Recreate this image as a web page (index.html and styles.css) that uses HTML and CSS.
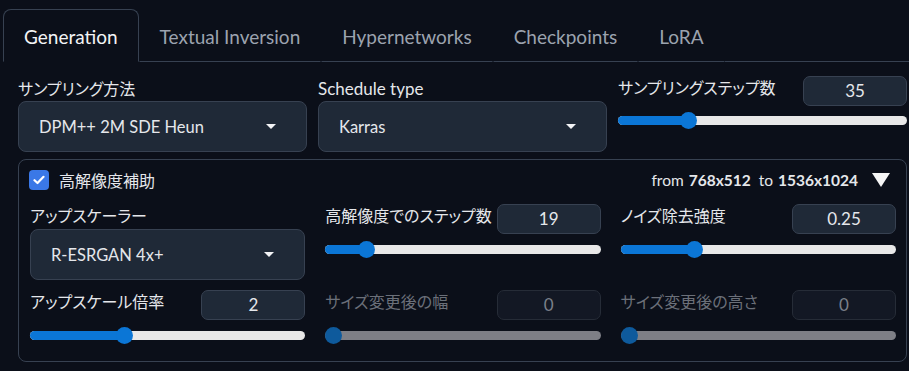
FILE: index.html
```html
<!DOCTYPE html>
<html lang="ja">
<head>
    <meta charset="UTF-8">
    <title>Generation</title>
    <link rel="stylesheet" href="styles.css">
</head>
<body>

    <!-- Tab bar -->
    <div class="tabs">
        <button class="tab active">Generation</button>
        <button class="tab">Textual Inversion</button>
        <button class="tab">Hypernetworks</button>
        <button class="tab">Checkpoints</button>
        <button class="tab">LoRA</button>
        <div class="tab-fill"></div>
    </div>

    <div class="panel">
        <!-- Sampler row -->
        <div class="row">
            <div class="col">
                <div class="field-label">サンプリング方法</div>
                <div class="dropdown">
                    <span>DPM++ 2M SDE Heun</span>
                    <span class="caret"></span>
                </div>
            </div>
            <div class="col">
                <div class="field-label latin">Schedule type</div>
                <div class="dropdown">
                    <span>Karras</span>
                    <span class="caret"></span>
                </div>
            </div>
            <div class="col">
                <div class="slider-head">
                    <div class="field-label">サンプリングステップ数</div>
                    <div class="number">35</div>
                </div>
                <div class="slider">
                    <div class="track"></div>
                    <div class="fill" style="width: 71px"></div>
                    <div class="thumb" style="left: 62px"></div>
                </div>
            </div>
        </div>

        <!-- Hires fix -->
        <div class="accordion">
            <div class="acc-head">
                <label class="check">
                    <span class="box">
                        <svg width="12" height="10" viewBox="0 0 12 10"><path d="M1.5 5.2 L4.5 8 L10.5 1.8" fill="none" stroke="#fff" stroke-width="2.2" stroke-linecap="round" stroke-linejoin="round"/></svg>
                    </span>
                    高解像度補助
                </label>
                <div class="acc-info">
                    from <b>768x512</b>&nbsp; to <b>1536x1024</b>
                    <svg class="acc-toggle" width="18" height="14" viewBox="0 0 18 14"><polygon points="0,0 18,0 9,14" fill="#f5f5f5"/></svg>
                </div>
            </div>

            <div class="row inner">
                <div class="col">
                    <div class="field-label">アップスケーラー</div>
                    <div class="dropdown">
                        <span>R-ESRGAN 4x+</span>
                        <span class="caret"></span>
                    </div>
                </div>
                <div class="col">
                    <div class="slider-head">
                        <div class="field-label">高解像度でのステップ数</div>
                        <div class="number">19</div>
                    </div>
                    <div class="slider">
                        <div class="track"></div>
                        <div class="fill" style="width: 41px"></div>
                        <div class="thumb" style="left: 33px"></div>
                    </div>
                </div>
                <div class="col">
                    <div class="slider-head">
                        <div class="field-label">ノイズ除去強度</div>
                        <div class="number">0.25</div>
                    </div>
                    <div class="slider">
                        <div class="track"></div>
                        <div class="fill" style="width: 73px"></div>
                        <div class="thumb" style="left: 65px"></div>
                    </div>
                </div>
            </div>

            <div class="row inner second">
                <div class="col">
                    <div class="slider-head">
                        <div class="field-label">アップスケール倍率</div>
                        <div class="number">2</div>
                    </div>
                    <div class="slider">
                        <div class="track"></div>
                        <div class="fill" style="width: 94px"></div>
                        <div class="thumb" style="left: 86px"></div>
                    </div>
                </div>
                <div class="col disabled">
                    <div class="slider-head">
                        <div class="field-label">サイズ変更後の幅</div>
                        <div class="number">0</div>
                    </div>
                    <div class="slider">
                        <div class="track"></div>
                        <div class="thumb" style="left: 0px"></div>
                    </div>
                </div>
                <div class="col disabled">
                    <div class="slider-head">
                        <div class="field-label">サイズ変更後の高さ</div>
                        <div class="number">0</div>
                    </div>
                    <div class="slider">
                        <div class="track"></div>
                        <div class="thumb" style="left: 0px"></div>
                    </div>
                </div>
            </div>
        </div>
    </div>

</body>
</html>
```
FILE: styles.css
```css
body {
    margin: 0;
    background-color: #0b0f19;
    color: #e5e7eb;
    font-family: Lato, "Noto Sans CJK JP", sans-serif;
    font-size: 16px;
}

/* Tabs */
.tabs {
    display: flex;
    padding: 9px 0 0 3px;
}
.tab {
    height: 53px;
    padding: 2px 20px 0;
    background: none;
    border: 1px solid transparent;
    border-bottom: 1px solid #374151;
    color: #9ca3af;
    font-family: inherit;
    font-size: 19px;
    cursor: pointer;
}
.tab.active {
    color: #f3f4f6;
    border: 1px solid #374151;
    border-bottom-color: transparent;
    border-radius: 8px 8px 0 0;
}
.tab-fill {
    flex-grow: 1;
    border-bottom: 1px solid #374151;
}

/* Content */
.panel {
    padding: 14px 2px 0 18px;
}
.row {
    display: flex;
    gap: 11px;
    align-items: flex-start;
}
.col {
    flex: 1;
    min-width: 0;
}
.field-label {
    height: 22px;
    line-height: 22px;
    margin-top: 2px;
    white-space: nowrap;
    color: #e5e7eb;
    font-feature-settings: "palt";
}
.field-label.latin {
    font-size: 17px;
}
.dropdown {
    display: flex;
    align-items: center;
    justify-content: space-between;
    height: 49px;
    margin-top: 1px;
    padding: 0 30px 0 20px;
    background-color: #1f2937;
    border: 1px solid #374151;
    border-radius: 8px;
    font-size: 16.5px;
}
.caret {
    width: 0;
    height: 0;
    border-left: 5px solid transparent;
    border-right: 5px solid transparent;
    border-top: 5px solid #f3f4f6;
}

/* Slider blocks */
.slider-head {
    display: flex;
    justify-content: space-between;
    align-items: flex-start;
}
.slider-head .field-label {
    margin-top: 1px;
}
.number {
    width: 102px;
    height: 28px;
    line-height: 28px;
    text-align: center;
    background-color: #1f2937;
    border: 1px solid #374151;
    border-radius: 7px;
    font-size: 17px;
}
.slider {
    position: relative;
    height: 17px;
    margin-top: 6px;
}
.track {
    position: absolute;
    left: 0;
    right: 0;
    top: 4px;
    height: 9px;
    border-radius: 5px;
    background-color: #e8e8e8;
}
.fill {
    position: absolute;
    left: 0;
    top: 4px;
    height: 9px;
    border-radius: 5px;
    background-color: #0b76d6;
}
.thumb {
    position: absolute;
    top: 0;
    width: 17px;
    height: 17px;
    border-radius: 50%;
    background-color: #0b76d6;
}

/* Accordion */
.accordion {
    margin-top: 7px;
    padding: 10px 10px 17px 11px;
    border: 1px solid #374151;
    border-radius: 8px;
}
.acc-head {
    display: flex;
    justify-content: space-between;
    align-items: center;
    height: 20px;
    margin-left: -1px;
}
.check {
    display: flex;
    align-items: center;
    gap: 10px;
}
.box {
    display: flex;
    align-items: center;
    justify-content: center;
    width: 20px;
    height: 20px;
    border-radius: 4px;
    background-color: #3a78e7;
}
.acc-info {
    display: flex;
    align-items: center;
    font-size: 15.5px;
    color: #e5e7eb;
    margin-right: 6px;
}
.acc-info b {
    margin-left: 5px;
}
.acc-toggle {
    margin-left: 14px;
}
.inner {
    gap: 20px;
    margin-top: 14px;
}
.inner .slider {
    margin-top: 7px;
}
.inner .col > .field-label {
    margin-top: 1px;
}
.inner .dropdown {
    margin-top: 2px;
}
.second {
    margin-top: 10px;
}

/* Disabled sliders */
.disabled .field-label {
    color: #6b7079;
}
.disabled .number {
    background-color: #131824;
    border-color: #262c37;
    color: #7b808a;
}
.disabled .track {
    background-color: #7e7f86;
}
.disabled .thumb {
    background-color: #0e5a9c;
}
```
